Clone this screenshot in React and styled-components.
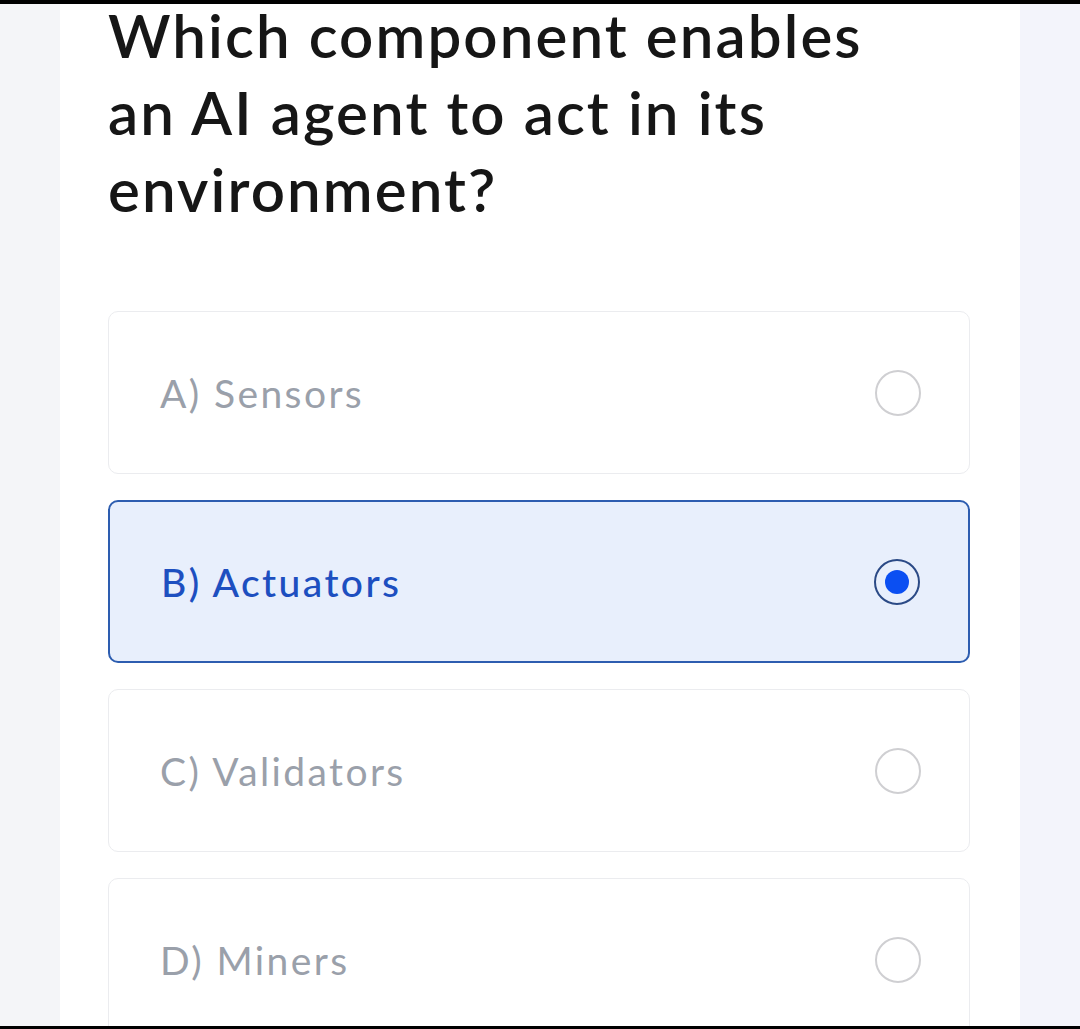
import React from "react";
import styled, { createGlobalStyle } from "styled-components";

const Global = createGlobalStyle`
  html, body { margin: 0; padding: 0; }
  body { font-family: "Lato", "Noto Sans", sans-serif; background: #000; }
  * { box-sizing: border-box; }
`;

const Frame = styled.div`
  height: 1029px;
  border-top: 4px solid #000;
  border-bottom: 3px solid #000;
  background: linear-gradient(to right, #f4f5f8 0 60px, #ffffff 60px 1020px, #f3f4fb 1020px);
  overflow: hidden;
  display: flex;
  flex-direction: column;
`;

const Card = styled.main`
  margin: 0 60px;
  flex: 1;
  background: #fff;
  padding: 0 50px 0 48px;
  display: flex;
  flex-direction: column;
`;

const Title = styled.h1`
  margin: -7px 0 0;
  font-size: 60px;
  line-height: 77px;
  font-weight: 600;
  color: #161616;
  letter-spacing: 2.1px;
`;

const Options = styled.div`
  margin-top: 83px;
  display: flex;
  flex-direction: column;
  gap: 26px;
`;

const Option = styled.div`
  height: 163px;
  flex-shrink: 0;
  border-radius: 10px;
  border: ${(p) => (p.$selected ? "2px solid #2d5db0" : "1.5px solid #ebecef")};
  background: ${(p) => (p.$selected ? "#e8effc" : "#fff")};
  display: flex;
  align-items: center;
  justify-content: space-between;
  padding: 0 48px 0 51px;
`;

const Label = styled.span`
  font-size: 39px;
  letter-spacing: 2.4px;
  font-weight: ${(p) => (p.$selected ? 500 : 400)};
  color: ${(p) => (p.$selected ? "#1d4fc0" : "#9aa0aa")};
`;

const Radio = styled.span`
  width: 46px;
  height: 46px;
  border-radius: 50%;
  border: 2.5px solid ${(p) => (p.$selected ? "#2b4a86" : "#cfcfd2")};
  display: flex;
  align-items: center;
  justify-content: center;
  &::after {
    content: "";
    width: 24px;
    height: 24px;
    border-radius: 50%;
    background: #0b4ff2;
    display: ${(p) => (p.$selected ? "block" : "none")};
  }
`;

const options = [
  { label: "A) Sensors" },
  { label: "B) Actuators", selected: true },
  { label: "C) Validators" },
  { label: "D) Miners" },
];

export default function App() {
  return (
    <>
      <Global />
      <Frame>
        <Card>
          <Title>
            Which component enables
            <br />
            an AI agent to act in its
            <br />
            environment?
          </Title>
          <Options>
            {options.map((o) => (
              <Option key={o.label} $selected={o.selected}>
                <Label $selected={o.selected}>{o.label}</Label>
                <Radio $selected={o.selected} />
              </Option>
            ))}
          </Options>
        </Card>
      </Frame>
    </>
  );
}
